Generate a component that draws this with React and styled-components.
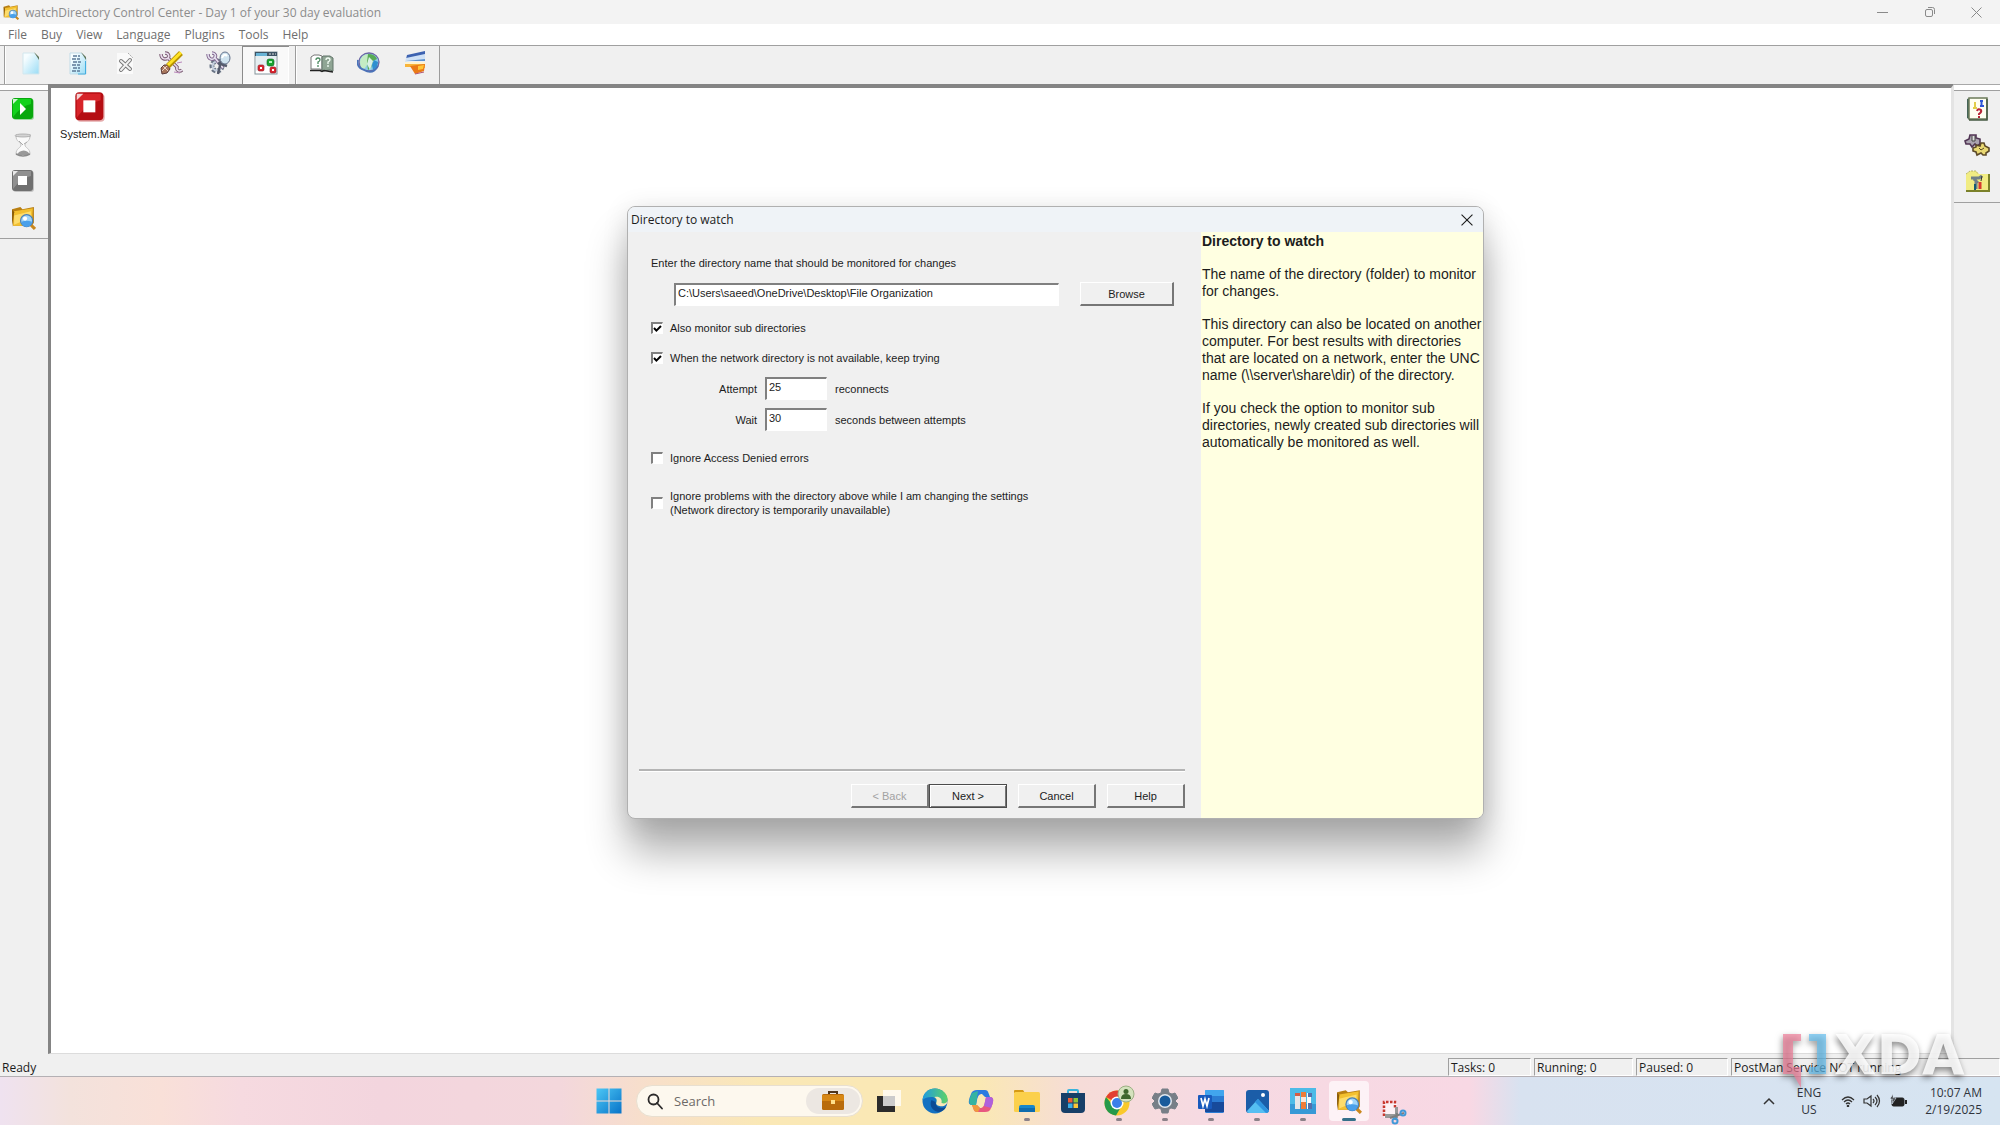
import React from "react";
import styled, { createGlobalStyle, css } from "styled-components";

const UI = '"Open Sans", "Noto Sans", sans-serif';
const CLASSIC = '"Liberation Sans", Arial, sans-serif';

const GlobalStyle = createGlobalStyle`
  *, *::before, *::after { box-sizing: border-box; }
  html, body { margin: 0; height: 100%; }
  body { font-family: ${UI}; font-size: 12px; color: #1c1c1c; background: #f0f0f0; overflow: hidden; }
  button, input { font: inherit; color: inherit; margin: 0; }
  svg { display: block; flex: none; }
`;

const Page = styled.div`
  display: flex;
  flex-direction: column;
  height: 100vh;
  position: relative;
`;

/* ---------- main window ---------- */
const TitleBar = styled.header`
  display: flex;
  align-items: center;
  height: 24px;
  padding-left: 3px;
  gap: 6px;
  background: #f3f3f3;
  color: #8c8c8c;
`;
const TitleText = styled.h1`
  flex: 1;
  margin: 0;
  font-size: 12px;
  font-weight: 400;
`;
const CaptionButtons = styled.div`
  display: flex;
`;
const CaptionButton = styled.button`
  display: grid;
  place-items: center;
  width: 47px;
  height: 22px;
  padding: 0;
  border: 0;
  background: none;
  color: #8a8a8a;
`;
const MenuBar = styled.nav`
  display: flex;
  align-items: center;
  height: 22px;
  padding-left: 8px;
  gap: 14px;
  background: #fff;
  border-bottom: 1px solid #a0a0a0;
`;
const MenuItem = styled.button`
  padding: 0;
  border: 0;
  background: none;
  font-size: 12px;
  line-height: 20px;
  color: #6e6e6e;
`;
const ToolBar = styled.div`
  display: flex;
  height: 38px;
  padding-left: 4px;
  background: #f0f0f0;
`;
const ToolGroup = styled.div`
  display: flex;
  padding: 0 6px 0 2px;
  border-left: 1px solid #9c9c9c;
  box-shadow: inset 1px 0 0 #fff;
  &:last-child {
    padding-right: 0;
    border-right: 1px solid #9c9c9c;
  }
`;
const ToolButton = styled.button`
  display: grid;
  place-items: center;
  width: 47px;
  height: 38px;
  padding: 0 0 4px;
  border: 0;
  background: none;
  ${(p) => p.$pressed && css`
    background: #f9f9f9;
    box-shadow: inset 1px 1px 0 #8c8c8c, inset -1px -1px 0 #fff;
  `}
`;
const Body = styled.main`
  flex: 1;
  display: flex;
  min-height: 0;
`;
const Rail = styled.aside`
  width: ${(p) => (p.$right ? 46 : 48)}px;
  padding-top: 5px;
  border-top: 1px solid #a8a8a8;
  background: linear-gradient(#fff, #fff) top / 100% 5px no-repeat #f0f0f0;
`;
const RailGroup = styled.div`
  display: flex;
  flex-direction: column;
  align-items: center;
  padding: 0 0 3px;
  border-top: 1px solid #a0a0a0;
  border-bottom: 1px solid #a0a0a0;
  ${(p) => !p.$right && css`padding-right: 2px;`}
`;
const RailButton = styled.button`
  display: grid;
  place-items: center;
  width: 36px;
  height: 36px;
  padding: 0;
  border: 0;
  background: none;
`;
const Workspace = styled.section`
  flex: 1;
  margin-bottom: 1px;
  padding: 3px 4px;
  background: #fff;
  border: solid #848484;
  border-width: 4px 3px 1px 3px;
  border-right-color: #e4e4e4;
  border-bottom-color: #dcdcdc;
`;
const TaskIcon = styled.button`
  display: flex;
  flex-direction: column;
  align-items: center;
  gap: 4px;
  width: 70px;
  padding: 0;
  border: 0;
  background: none;
  font-family: ${CLASSIC};
  font-size: 11px;
  line-height: 14px;
`;
const StatusBar = styled.footer`
  display: flex;
  height: 22px;
  padding-top: 3px;
  background: #f0f0f0;
  border-bottom: 1px solid #b4b0b4;
  gap: 3px;
  line-height: 17px;
`;
const StatusText = styled.div`
  flex: 1;
  padding: 1px 0 0 2px;
`;
const StatusPanel = styled.div`
  width: ${(p) => p.$width}px;
  padding-left: 2px;
  border: 1px solid #a0a0a0;
  border-right-color: #fff;
  border-bottom-color: #fff;
  white-space: nowrap;
`;

/* ---------- wizard dialog ---------- */
const Dialog = styled.section`
  position: absolute;
  left: 627px;
  top: 206px;
  width: 857px;
  height: 613px;
  display: flex;
  flex-direction: column;
  border: 1px solid #b0b0b0;
  border-radius: 8px;
  background: #f0f0f0;
  box-shadow: 0 34px 40px rgba(0, 0, 0, 0.3), 0 4px 26px rgba(0, 0, 0, 0.12);
`;
const DialogTitle = styled.header`
  display: flex;
  align-items: center;
  justify-content: space-between;
  height: 25px;
  padding: 0 8px 0 3px;
  background: #eff3f7;
  border-radius: 7px 7px 0 0;
`;
const DialogHeading = styled.h2`
  margin: 0;
  font-size: 12px;
  font-weight: 400;
`;
const CloseButton = styled.button`
  display: grid;
  place-items: center;
  width: 16px;
  height: 16px;
  padding: 0;
  border: 0;
  background: none;
`;
const DialogBody = styled.div`
  flex: 1;
  display: flex;
`;
const Form = styled.form`
  flex: 1;
  display: flex;
  flex-direction: column;
  padding: 24px 16px 10px 11px;
  font-family: ${CLASSIC};
  font-size: 11px;
  line-height: 14px;
`;
const Fields = styled.div`
  flex: 1;
  padding-left: 12px;
`;
const PathRow = styled.div`
  display: flex;
  align-items: center;
  gap: 21px;
  padding: 12px 11px 0 23px;
`;
const Input = styled.input`
  ${(p) => (p.$short ? css`width: 62px;` : css`flex: 1;`)}
  min-width: 0;
  height: 23px;
  padding: 0 2px 4px;
  border: 1px solid #fff;
  border-top: 2px solid #808080;
  border-left: 2px solid #808080;
  background: #fff;
  outline: none;
`;
const PushButton = styled.button`
  width: ${(p) => p.$width || 78}px;
  height: 24px;
  padding: 0;
  border: 1px solid #fff;
  border-right: 2px solid #767676;
  border-bottom: 2px solid #767676;
  background: #f0f0f0;
  ${(p) => p.$primary && css`
    border: 1px solid #4c4c4c;
    box-shadow: inset 1px 1px 0 #fff, inset -1px -1px 0 #767676;
  `}
  &:disabled { color: #a2a2a2; }
`;
const CheckLabel = styled.label`
  display: flex;
  align-items: center;
  gap: 7px;
  width: max-content;
  margin-top: ${(p) => p.$gap}px;
`;
const Check = styled.input`
  appearance: none;
  width: 12px;
  height: 12px;
  border: 1px solid #fff;
  border-top: 2px solid #808080;
  border-left: 2px solid #808080;
  background: #fff;
  &:checked {
    background: #fff url("data:image/svg+xml,%3Csvg xmlns='http://www.w3.org/2000/svg' viewBox='0 0 9 9'%3E%3Cpath d='M1 4l2.4 2.6L8 2' fill='none' stroke='black' stroke-width='2'/%3E%3C/svg%3E") center / 9px 9px no-repeat;
  }
`;
const Numbers = styled.div`
  display: grid;
  grid-template-columns: 106px 62px 1fr;
  align-items: center;
  gap: 8px;
  margin-top: 12px;
`;
const NumberLabel = styled.label`
  text-align: right;
`;
const Actions = styled.div`
  display: flex;
  justify-content: flex-end;
  gap: 11px;
  padding-top: 13px;
  border-top: 2px solid #b4b4b4;
  box-shadow: inset 0 1px 0 #fff;
`;
const Pair = styled.div`
  display: flex;
`;
const HelpPane = styled.aside`
  width: 282px;
  padding: 1px 0 0 1px;
  background: #ffffe1;
  border-radius: 0 0 7px 0;
  font-family: ${CLASSIC};
  font-size: 14px;
  line-height: 17px;
  white-space: nowrap;
`;
const HelpTitle = styled.h3`
  margin: 0 0 16px;
  font-size: 14px;
`;
const HelpText = styled.p`
  margin: 0 0 16px;
`;

/* ---------- taskbar ---------- */
const TaskBar = styled.footer`
  display: grid;
  grid-template-columns: 1fr auto 1fr;
  height: 48px;
  padding-left: 4px;
  background: linear-gradient(90deg, #efe2f0 0%, #f3e2dc 3.5%, #f9e0d8 8%, #f6dae0 12%, #f3d5de 19%, #f3d7dc 28%, #f8e0c8 33%, #fae8b6 38%, #fae8b4 49%, #f6dcd8 54%, #f6dae2 60%, #f8d8e4 73.5%, #d8e2f0 76%, #d6e4f1 100%);
`;
const Apps = styled.div`
  grid-column: 2;
  display: flex;
  align-items: center;
`;
const AppButton = styled.button`
  position: relative;
  display: grid;
  place-items: center;
  width: 46px;
  height: 48px;
  padding: ${(p) => (p.$low ? 22 : 0)}px 0 0;
  border: 0;
  background: none;
  ${(p) => p.$active && css`
    &::before {
      content: "";
      position: absolute;
      inset: 4px 3px;
      border-radius: 4px;
      background: rgba(255, 250, 252, 0.75);
    }
  `}
  ${(p) => p.$open && css`
    &::after {
      content: "";
      position: absolute;
      bottom: 4px;
      left: calc(50% - ${p.$active ? 7 : 3}px);
      width: ${p.$active ? 14 : 6}px;
      height: 3px;
      border-radius: 2px;
      background: ${p.$active ? "#35708a" : "#8b8188"};
    }
  `}
  svg { position: relative; }
`;
const SearchBox = styled.label`
  display: flex;
  align-items: center;
  width: 227px;
  height: 32px;
  margin: 0 3px 0 4px;
  padding: 0 2px 0 10px;
  gap: 11px;
  border: 1px solid #e8dfd0;
  border-radius: 16px;
  background: #fdf8ee;
`;
const SearchInput = styled.input`
  flex: 1;
  min-width: 0;
  padding: 0;
  border: 0;
  background: none;
  outline: none;
  font-size: 13px;
  &::placeholder { color: #6d6a68; opacity: 1; }
`;
const SearchArt = styled.span`
  display: grid;
  place-items: center;
  width: 54px;
  height: 26px;
  border-radius: 13px;
  background: #ece7e2;
`;
const Tray = styled.div`
  grid-column: 3;
  display: flex;
  align-items: center;
  justify-content: flex-end;
  padding-right: 18px;
  line-height: 17px;
  color: #30343c;
`;
const TrayButton = styled.button`
  display: flex;
  align-items: center;
  padding: 0;
  border: 0;
  background: none;
  gap: ${(p) => p.$gap || 0}px;
  margin-right: ${(p) => p.$after || 0}px;
`;
const TrayText = styled.div`
  text-align: ${(p) => p.$align};
  margin-right: ${(p) => p.$after || 0}px;
`;
const Logo = styled.svg`
  position: absolute;
  right: 28px;
  bottom: 35px;
  overflow: visible;
  pointer-events: none;
  filter: drop-shadow(-1px 3px 3px rgba(0, 0, 0, 0.55));
`;
const LogoText = styled.text`
  font-family: "DejaVu Sans", sans-serif;
  font-weight: 700;
  font-size: 55px;
`;

/* ---------- drawings ---------- */
const FolderSearch = ({ size = 24 }) => (
  <svg width={size} height={size} viewBox="0 0 24 24">
    <path d="M1 4l8-2 2 2 11-2v15l-2 3H2z" fill="#b97f12" />
    <path d="M3 6l18-3-1 17H2z" fill="#f3c02f" />
    <path d="M3 10l16-4v6L3 19z" fill="#ffe27a" opacity=".8" />
    <path d="M1 4v17l2-14" fill="#8a5c08" />
    <path d="M18 18l5 5" stroke="#c9871c" strokeWidth="3" />
    <circle cx="15" cy="15" r="5.8" fill="#9fd5fa" stroke="#4a7fb5" strokeWidth="1.2" />
    <path d="M10 16a5 5 0 0 0 10 0q-5-2-10 0" fill="#4aa0ea" />
    <circle cx="13.5" cy="13" r="2" fill="#fff" />
  </svg>
);
const NewDoc = () => (
  <svg width="18" height="23" viewBox="0 0 18 23">
    <defs><linearGradient id="doc" x2="1" y2="1"><stop offset=".2" stopColor="#f6fdff" /><stop offset="1" stopColor="#9adcf5" /></linearGradient></defs>
    <path d="M1 1h11l5 5v16H1z" fill="url(#doc)" stroke="#d2e7ee" />
    <path d="M12 0l5 5v3z" fill="#5d7358" />
  </svg>
);
const TextDoc = () => (
  <svg width="18" height="23" viewBox="0 0 18 23">
    <path d="M1 1h11l5 5v16H1z" fill="url(#doc)" stroke="#c2dce8" />
    <path d="M4 4h7M3 7h8M4 10h8M3 13h9M4 16h7M3 19h8" stroke="#5c7a98" strokeWidth="1.3" strokeDasharray="4 1 3 1" />
    <path d="M12 0l5 5v3z" fill="#5d7358" />
    <path d="M16.5 9v13H9" stroke="#43aee0" fill="none" />
  </svg>
);
const DeleteDoc = () => (
  <svg width="18" height="23" viewBox="0 0 18 23">
    <path d="M1 1h11l5 5v16H1z" fill="#fafafa" />
    <path d="M12 1l5 5" stroke="#aaa" strokeDasharray="2 1" />
    <path d="M5 9l9 8M14 8l-9 10" stroke="#777" strokeWidth="4" strokeLinecap="round" />
    <path d="M5 9l9 8M14 8l-9 10" stroke="#f2f2f2" strokeWidth="2" strokeLinecap="round" />
  </svg>
);
const ToolsIcon = () => (
  <svg width="25" height="24" viewBox="0 0 25 24" fill="none">
    <path d="M2 3c0 5 4 6 7 4l9 9c-1 4 3 5 5 3M8 8c3-2 2-6-2-6" stroke="#78576f" strokeWidth="3.400" />
    <path d="M2 3c0 5 4 6 7 4l9 9c-1 4 3 5 5 3M8 8c3-2 2-6-2-6" stroke="#e9dced" strokeWidth="1.600" />
    <path d="M2 17l3-3h4l2 4-3 4-5 1z" fill="#a8765c" stroke="#5a3a3a" />
    <path d="M4 15l5 5M3 20l5-5" stroke="#ecd3c4" />
    <path d="M9 15L22 2" stroke="#b89300" strokeWidth="5.500" />
    <path d="M9 14L22 1.500" stroke="#ffe326" strokeWidth="3" />
    <path d="M18 12l5-1M15 21l6 1" stroke="#b987bb" />
  </svg>
);
const GearTool = () => (
  <svg width="25" height="24" viewBox="0 0 25 24" fill="none">
    <circle cx="11" cy="15" r="5" stroke="#687384" strokeWidth="5" strokeDasharray="3 1.500" />
    <circle cx="11" cy="15" r="4.500" stroke="#c3cddd" strokeWidth="2" />
    <path d="M2 3c0 6 5 6 7 4l8 10M8 7c3-2 1-5-2-5" stroke="#80658e" strokeWidth="3.400" />
    <path d="M2 3c0 6 5 6 7 4l8 10M8 7c3-2 1-5-2-5" stroke="#e4e0ee" strokeWidth="1.600" />
    <path d="M15 10l-3 13M12 12l9 3" stroke="#555b6c" strokeWidth="2.400" />
    <ellipse cx="19" cy="7" rx="5" ry="6" fill="#cfe3ef" stroke="#65738d" />
    <path d="M16 7q2-5 5-2" stroke="#fff" strokeWidth="2" />
  </svg>
);
const Panel = () => (
  <svg width="24" height="24" viewBox="0 0 24 24">
    <rect x="1" y="1" width="22" height="22" fill="#fff" stroke="#84939a" />
    <path d="M1 1h22v4H1z" fill="#3d5364" /><path d="M2 2h11v3H2z" fill="#68b3d5" />
    <path d="M15 3h2m1 0h2m1 0h1" stroke="#ddd" />
    <path d="M2 5h20v6L2 20z" fill="#e5eef1" />
    <rect x="13" y="8" width="7" height="7" rx="2" fill="#19a52f" stroke="#126322" strokeWidth=".6" /><path d="M15 10h3v2h-3z" fill="#b5f4c0" />
    <rect x="4" y="14" width="6" height="6" rx="1.500" fill="#dc2630" stroke="#8c1420" strokeWidth=".6" /><path d="M6 16h2v2H6z" fill="#fff" />
    <rect x="16" y="16" width="6" height="6" rx="1.500" fill="#dc2630" stroke="#8c1420" strokeWidth=".6" /><path d="M18 18h2v2h-2z" fill="#fff" />
  </svg>
);
const Book = () => (
  <svg width="24" height="20" viewBox="0 0 24 20">
    <path d="M1 4l3-2h5l3 1v14l-2-1H1z" fill="#fff" stroke="#777" />
    <path d="M12 4l1-1h7l3 2v13l-3-1-8 1z" fill="#8fa594" stroke="#62756a" />
    <path d="M0 17.500h10l2 1 2-1 9 1.500" stroke="#222" fill="none" strokeWidth="1.500" />
    <path d="M6 7q0-2 2-2t2 2q0 1-2 2v2m0 1v2" stroke="#4b8a60" fill="none" strokeWidth="1.300" />
    <path d="M16 7q0-2 2-2t2 2q0 1-2 2v2m0 1v2" stroke="#f5fff7" fill="none" strokeWidth="1.300" />
  </svg>
);
const Globe = () => (
  <svg width="24" height="22" viewBox="0 0 24 22">
    <ellipse cx="12" cy="10" rx="10" ry="9" fill="#8ccbe8" stroke="#6c66a5" strokeWidth="1.300" />
    <path d="M3 10Q4 2 12 2l1 6-5 8-3 1Q3 14 3 10" fill="#c4ecc4" />
    <path d="M11 2q7 0 9 5l-4 2-2 7-3 2-1-8z" fill="#58aa54" />
    <path d="M12 5l4 4-3 9-3-6z" fill="#f0fbff" opacity=".85" />
    <path d="M17 8l4 2q0 5-5 8l-1-5z" fill="#2f8fd0" />
    <path d="M1 8q-2 7 6 10 9 5 14-4" fill="none" stroke="#4a72b8" strokeWidth="1.800" />
  </svg>
);
const Cards = () => (
  <svg width="23" height="24" viewBox="0 0 23 24">
    <path d="M3 4L21 0v4L2 8z" fill="#3d62b0" /><path d="M2 7l19-4v5L1 11z" fill="#cfe1f6" /><path d="M2 10l19-2v2H1z" fill="#5c92d0" />
    <path d="M1 11h20v6l-7-1H1z" fill="#f8b43a" /><path d="M1 11h20v2H1z" fill="#fff3cf" />
    <path d="M6 15l15-2-1 7-9 3z" fill="#ea7a17" /><path d="M11 23l9-2" stroke="#b15572" /><path d="M14 15l6-1-1 4-5 1z" fill="#ffc638" />
  </svg>
);
const SquareSign = ({ size, dark, light, play }) => (
  <svg width={size} height={size} viewBox="0 0 24 24">
    <rect x="2" y="2" width="21" height="21" rx="3" fill={dark} opacity=".35" />
    <rect x="1" y="1" width="21" height="21" rx="3" fill={dark} />
    <path d="M3 2h17v5Q10 9 2 20V4z" fill={light} opacity=".8" />
    <path d="M2 2h5L2 7z" fill="#fff" opacity=".8" />
    {play ? <path d="M9 6l6 6-6 6z" fill="#fff" /> : <rect x="7" y="7" width="9" height="9" fill="#fff" />}
  </svg>
);
const Hourglass = () => (
  <svg width="20" height="24" viewBox="0 0 20 24">
    <path d="M3 3h14c0 6-5 6-5 9s5 3 5 9H3c0-6 5-6 5-9S3 9 3 3" fill="#fafafa" stroke="#c4c4c4" />
    <path d="M6 19q5-3 9 0l2 3H4z" fill="#999" /><ellipse cx="10" cy="2.500" rx="8" ry="1.500" fill="#d4d4d4" stroke="#a4a4a4" strokeWidth=".8" />
    <path d="M3 21q7 4 14 0" stroke="#8a8a8a" fill="none" strokeWidth="1.500" /><path d="M6 8l4 4M14 9l-3 2" stroke="#aaa" />
  </svg>
);
const Manual = () => (
  <svg width="22" height="24" viewBox="0 0 22 24">
    <path d="M1 2l3-1v22l-3-2z" fill="#456458" /><rect x="3" y="1" width="18" height="21" fill="#fffff1" stroke="#6c7b59" strokeWidth="1.500" />
    <path d="M21 2v21H3" stroke="#455943" strokeWidth="1.500" fill="none" />
    <path d="M14 4h3M15.500 4v5M14 9h4" stroke="#3058d8" strokeWidth="2" /><path d="M9 5v7M7 11h4" stroke="#e2cd48" strokeWidth="2" />
    <path d="M11 14q1-3 4-1 1 2-2 4v1m0 1v2" stroke="#b62637" strokeWidth="2" fill="none" />
  </svg>
);
const Gears = () => (
  <svg width="26" height="24" viewBox="0 0 26 24">
    <path d="M8 2h4v3l4 1v5l-3 2-2-2-3 3-2-3H2L1 8l4-2 1-4z" fill="#aaa3af" stroke="#513554" strokeWidth="1.600" />
    <path d="M8 3v5h3V3" stroke="#444" fill="#ddd" />
    <path d="M12 12l4 1 1-3h3l1 3 4 2v3l-3 2v2h-3l-2-2-4 2-1-3-3-1v-3l3-1z" fill="#e9d873" stroke="#5d4a28" strokeWidth="1.600" />
    <path d="M15 15l2 2 3-2" stroke="#554723" fill="none" />
  </svg>
);
const ToolFolder = () => (
  <svg width="25" height="22" viewBox="0 0 25 22">
    <path d="M1 4l4-3h6l3 3h9v16H1z" fill="#f1ec83" /><path d="M1 4l4-3h6l2 3" stroke="#b8b46d" fill="none" strokeDasharray="2 1" />
    <path d="M24 4v17H1" stroke="#7b812a" strokeWidth="2" fill="none" />
    <path d="M6 8h8l3-2M9 9l4 4M11 12v7" stroke="#718088" strokeWidth="3" fill="none" />
    <path d="M15 12v7" stroke="#d73b30" strokeWidth="3" /><path d="M16 11l1-5" stroke="#333" /><path d="M10 14v6" stroke="#165b71" strokeWidth="2" />
  </svg>
);
const Lens = () => (
  <svg width="16" height="17" viewBox="0 0 16 17" fill="none" stroke="#2c2a2a" strokeWidth="1.800"><circle cx="6.500" cy="6.500" r="5" /><path d="M10 10l5 5.500" strokeLinecap="round" /></svg>
);
const Cross = ({ size = 11 }) => (
  <svg width={size} height={size} viewBox="0 0 11 11"><path d="M.5.5l10 10m0-10l-10 10" stroke="currentColor" fill="none" /></svg>
);
const Briefcase = () => (
  <svg width="24" height="20" viewBox="0 0 24 20"><path d="M8 4V1h8v3" stroke="#50351c" strokeWidth="2" fill="none" /><rect x="1" y="3" width="22" height="16" rx="1.500" fill="#b96c0c" /><path d="M1 4h22v6H1z" fill="#d78715" /><rect x="10" y="9" width="4" height="4" fill="#ffe08a" /></svg>
);
const Windows = () => (
  <svg width="26" height="26" viewBox="0 0 26 26"><defs><linearGradient id="win" x2="1" y2="1"><stop stopColor="#4cc7f5" /><stop offset="1" stopColor="#0873c8" /></linearGradient></defs><path d="M.5.5h12v12H.5zM13.500.5h12v12h-12zM.5 13.500h12v12H.5zM13.500 13.500h12v12h-12z" fill="url(#win)" /></svg>
);
const TaskView = () => (
  <svg width="26" height="24" viewBox="0 0 26 24"><rect x="1" y="7" width="18" height="16" fill="#2b2b2b" /><rect x="7" y="1" width="18" height="16" fill="#fff" opacity=".75" /><path d="M7 7h12v10H7z" fill="#cbcbcb" /></svg>
);
const Edge = () => (
  <svg width="26" height="26" viewBox="0 0 26 26"><defs><linearGradient id="eg" x2="1"><stop stopColor="#1e9be0" /><stop offset="1" stopColor="#5ed267" /></linearGradient></defs>
    <circle cx="13" cy="13" r="12.500" fill="#1471c1" /><path d="M.6 12C1 5 6 .5 13 .5S25.500 6 25.500 11c0 4-3 6-7 6-3 0-5-1-4-3 1-3-2-5-5-5-4 0-7 1-8.900 3" fill="url(#eg)" />
    <path d="M9.500 12c-3 6 2 12 8 12 3-1 5-2 6.500-5-5 2-10 1-10.500-5z" fill="#0d4b94" /><path d="M25.500 13c0 4-4 6-8 5-3-.5-4-2-3-4 1-3-1-4-2-5 5-1 8 2 7 6 3 1 5 0 6-2" fill="#fae8b8" /></svg>
);
const Copilot = () => (
  <svg width="26" height="24" viewBox="0 0 26 24"><path d="M9 1h8c2 0 3 1 3.500 3L22 8h-5l-3-3c-3 0-4 2-5 6l-1 5H4C1 16 0 14 1.500 9L3 5c1-3 3-4 6-4" fill="#2b7be0" /><path d="M2 9l2-5 6-2-2 14H4c-3 0-3-3-2-7" fill="#35b4a0" /><path d="M17 23H9c-2 0-3-1-3.500-3L4 16h5l3 3c3 0 4-2 5-6l1-5h4c3 0 4 2 2.500 7L23 19c-1 3-3 4-6 4" fill="#e8587f" /><path d="M18 8h4c3 0 4 2 2.500 7L23 19l-7-2z" fill="#ae61dc" /><path d="M4 16h5l3 3-2 4c-3 0-4-1-4.500-3z" fill="#f09a3e" /></svg>
);
const Explorer = () => (
  <svg width="26" height="24" viewBox="0 0 26 24"><path d="M0 2q0-1 1-1h8l2 3H0z" fill="#d59a16" /><rect y="3" width="26" height="20" rx="1.500" fill="#fbd04c" /><path d="M5 23v-5q0-2 2-2h12q2 0 2 2v5z" fill="#1687cb" /><path d="M5 19h16v4H5z" fill="#0e6cae" /></svg>
);
const Store = () => (
  <svg width="26" height="26" viewBox="0 0 26 26"><path d="M8 6V3q0-1 1-1h8q1 0 1 1v3" stroke="#39b3dc" strokeWidth="2" fill="none" /><path d="M1 5h24v16q0 4-4 4H5q-4 0-4-4z" fill="#173f68" /><path d="M8 10h4.500v4.500H8z" fill="#f05c36" /><path d="M13.500 10H18v4.500h-4.500z" fill="#8fc438" /><path d="M8 15.500h4.500V20H8z" fill="#3aaee8" /><path d="M13.500 15.500H18V20h-4.500z" fill="#fcc537" /></svg>
);
const Chrome = () => (
  <svg width="32" height="32" viewBox="0 0 32 32"><circle cx="14" cy="18" r="12.500" fill="#fac92b" /><path d="M14 18L3 12A12.500 12.500 0 0 1 25 12z" fill="#e34032" /><path d="M14 18h-6L3 12a12.500 12.500 0 0 0 10 18.500l4-7z" fill="#26994a" /><circle cx="14" cy="18" r="6.500" fill="#fff" /><circle cx="14" cy="18" r="5" fill="#3c7fe8" /><circle cx="23" cy="9" r="8" fill="#d4e2bd" stroke="#9cb084" /><circle cx="23" cy="6.500" r="2.500" fill="#3f672d" /><path d="M18 14q0-5 5-5t5 5z" fill="#3f672d" /></svg>
);
const Settings = () => (
  <svg width="26" height="26" viewBox="0 0 26 26"><path d="M10 1h6l1 4 3 1 3-1 3 5-3 3 3 3-3 5-4-1-2 1-1 4h-6l-1-4-2-1-4 1-3-5 3-3-3-3 3-5 3 1 3-1z" fill="#777f87" stroke="#777f87" strokeLinejoin="round" /><circle cx="13" cy="13" r="7" fill="#e1e8ef" /><circle cx="13" cy="13" r="5.500" fill="#175b9b" /></svg>
);
const Word = () => (
  <svg width="27" height="25" viewBox="0 0 27 25"><rect x="7" y="1" width="19" height="23" rx="1.500" fill="#2b7cd3" /><path d="M7 2q0-1 1-1h17q1 0 1 1v5H7z" fill="#41a5ee" /><path d="M7 13h19v10H7z" fill="#174a9b" /><rect x="0" y="6" width="14" height="14" rx="1" fill="#185abd" /><path d="M3 9l2 8 2-7 2 7 2-8" stroke="#fff" strokeWidth="1.700" fill="none" /></svg>
);
const Photos = () => (
  <svg width="25" height="25" viewBox="0 0 25 25"><rect x="1" y="1" width="23" height="23" rx="3" fill="#1b5da8" /><path d="M2 22L13 10l11 12q-1 2-3 2H4q-2 0-2-2" fill="#55bff2" /><path d="M13 10l11 12q-1 2-3 2L10 13z" fill="#2e93df" /><circle cx="18" cy="6" r="2" fill="#fff" /></svg>
);
const Binders = () => (
  <svg width="26" height="26" viewBox="0 0 26 26"><path d="M0 0h26v26H0z" fill="#4dbbe7" /><path d="M0 16h26v10H0z" fill="#3799d6" /><path d="M5 5h5v16H5z" fill="#e5e6e8" /><path d="M5 5h5v3H5z" fill="#d45d43" /><path d="M11 4h5v17h-5z" fill="#ee7c39" /><path d="M11 9h5v5h-5z" fill="#fbe7dc" /><path d="M17 5h4v16h-4z" fill="#fafafa" /><path d="M18 5h4v4h-4zM18 15h4v6h-4z" fill="#5470ac" /></svg>
);
const Snip = () => (
  <svg width="26" height="26" viewBox="0 0 26 26"><rect x="2" y="3" width="13" height="16" fill="#fff" opacity=".65" /><path d="M2 17V3h11v6" stroke="#c8392f" strokeWidth="2.500" strokeDasharray="2.500 1.500" fill="none" /><path d="M3 15h13v4H3zM13 8h3v11h-3z" fill="#999" /><path d="M8 19l14-5M13 21l2-7" stroke="#7d7d7d" strokeWidth="2" /><circle cx="21" cy="14" r="2.500" fill="none" stroke="#4199d8" strokeWidth="2" /><circle cx="13" cy="22" r="2.500" fill="none" stroke="#4199d8" strokeWidth="2" /></svg>
);
const Chevron = () => <svg width="12" height="8" viewBox="0 0 12 8"><path d="M1 7l5-5 5 5" stroke="#333" strokeWidth="1.500" fill="none" /></svg>;
const Wifi = () => <svg width="14" height="12" viewBox="0 0 14 12" fill="none" stroke="#333" strokeWidth="1.200"><path d="M1 5q6-6 12 0M3 7q4-4 8 0M5 9q2-2 4 0" /><circle cx="7" cy="11" r=".7" fill="#333" /></svg>;
const Speaker = () => <svg width="18" height="14" viewBox="0 0 18 14" fill="none" stroke="#333" strokeWidth="1.200"><path d="M1 5h3l4-3v10L4 9H1zM10 5q2 2 0 4M12 3q4 4 0 8M14 1q5 6 0 12" /></svg>;
const Battery = () => <svg width="18" height="14" viewBox="0 0 18 14"><rect x="3" y="4" width="12" height="8" rx="1.500" fill="#222" stroke="#222" /><path d="M16 6h2v4h-2z" fill="#222" /><path d="M4 0L1 5h3l-1 5 4-6H4z" fill="#222" stroke="#d7e3f0" strokeWidth=".7" /></svg>;

const tools = [["New task", NewDoc], ["Edit task", TextDoc], ["Delete task", DeleteDoc], ["Configure", ToolsIcon], ["Service", GearTool], ["Panel", Panel]];
const links = [["Manual", Book], ["Website", Globe], ["Buy", Cards]];
const apps = [["Task view", TaskView], ["Edge", Edge], ["Copilot", Copilot], ["File Explorer", Explorer, 1], ["Store", Store], ["Chrome", Chrome, 1], ["Settings", Settings, 1], ["Word", Word, 1], ["Photos", Photos, 1], ["Library", Binders, 1]];

export default function App() {
  return (
    <Page>
      <GlobalStyle />
      <TitleBar>
        <FolderSearch size={16} />
        <TitleText>watchDirectory Control Center - Day 1 of your 30 day evaluation</TitleText>
        <CaptionButtons>
          <CaptionButton aria-label="Minimize"><svg width="11" height="11"><path d="M0 5.500h11" stroke="currentColor" /></svg></CaptionButton>
          <CaptionButton aria-label="Restore"><svg width="12" height="12" fill="none" stroke="currentColor"><rect x="1.500" y="3.500" width="7" height="7" rx="1.500" /><path d="M4 1.500h4.500q2 0 2 2V8" /></svg></CaptionButton>
          <CaptionButton aria-label="Close"><Cross /></CaptionButton>
        </CaptionButtons>
      </TitleBar>
      <MenuBar>
        {["File", "Buy", "View", "Language", "Plugins", "Tools", "Help"].map((m) => <MenuItem key={m}>{m}</MenuItem>)}
      </MenuBar>
      <ToolBar>
        <ToolGroup>
          {tools.map(([name, Icon]) => <ToolButton key={name} aria-label={name} $pressed={name === "Panel"}><Icon /></ToolButton>)}
        </ToolGroup>
        <ToolGroup>
          {links.map(([name, Icon]) => <ToolButton key={name} aria-label={name}><Icon /></ToolButton>)}
        </ToolGroup>
      </ToolBar>
      <Body>
        <Rail>
          <RailGroup>
            <RailButton aria-label="Start"><SquareSign size={24} dark="#08a80d" light="#16dc20" play /></RailButton>
            <RailButton aria-label="Pause"><Hourglass /></RailButton>
            <RailButton aria-label="Stop"><SquareSign size={24} dark="#707070" light="#999" /></RailButton>
            <RailButton aria-label="Browse"><FolderSearch size={25} /></RailButton>
          </RailGroup>
        </Rail>
        <Workspace>
          <TaskIcon><SquareSign size={32} dark="#b50d12" light="#e02b2f" />System.Mail</TaskIcon>
        </Workspace>
        <Rail $right>
          <RailGroup $right>
            <RailButton aria-label="Guide"><Manual /></RailButton>
            <RailButton aria-label="Plugins"><Gears /></RailButton>
            <RailButton aria-label="Tool folder"><ToolFolder /></RailButton>
          </RailGroup>
        </Rail>
      </Body>
      <StatusBar>
        <StatusText>Ready</StatusText>
        <StatusPanel $width={83}>Tasks: 0</StatusPanel>
        <StatusPanel $width={99}>Running: 0</StatusPanel>
        <StatusPanel $width={92}>Paused: 0</StatusPanel>
        <StatusPanel $width={269}>PostMan Service NOT running</StatusPanel>
      </StatusBar>
      <TaskBar>
        <Apps>
          <AppButton aria-label="Start menu"><Windows /></AppButton>
          <SearchBox>
            <Lens />
            <SearchInput type="search" placeholder="Search" aria-label="Search" />
            <SearchArt><Briefcase /></SearchArt>
          </SearchBox>
          {apps.map(([name, Icon, open]) => <AppButton key={name} aria-label={name} $open={open}><Icon /></AppButton>)}
          <AppButton aria-label="watchDirectory" $open $active><FolderSearch size={26} /></AppButton>
          <AppButton aria-label="Snipping Tool" $low><Snip /></AppButton>
        </Apps>
        <Tray>
          <TrayButton aria-label="Hidden icons" $after={22}><Chevron /></TrayButton>
          <TrayText $align="center" $after={20}>ENG<br />US</TrayText>
          <TrayButton aria-label="Network, volume, battery" $gap={8} $after={18}><Wifi /><Speaker /><Battery /></TrayButton>
          <TrayText $align="right">10:07 AM<br />2/19/2025</TrayText>
        </Tray>
      </TaskBar>

      <Dialog role="dialog" aria-labelledby="dlg">
        <DialogTitle>
          <DialogHeading id="dlg">Directory to watch</DialogHeading>
          <CloseButton aria-label="Close dialog"><Cross size={12} /></CloseButton>
        </DialogTitle>
        <DialogBody>
          <Form onSubmit={(e) => e.preventDefault()}>
            <Fields>
              <label htmlFor="path">Enter the directory name that should be monitored for changes</label>
              <PathRow>
                <Input id="path" defaultValue="C:\Users\saeed\OneDrive\Desktop\File Organization" />
                <PushButton type="button" $width={94}>Browse</PushButton>
              </PathRow>
              <CheckLabel $gap={15}><Check type="checkbox" defaultChecked />Also monitor sub directories</CheckLabel>
              <CheckLabel $gap={16}><Check type="checkbox" defaultChecked />When the network directory is not available, keep trying</CheckLabel>
              <Numbers>
                <NumberLabel htmlFor="attempt">Attempt</NumberLabel>
                <Input $short id="attempt" defaultValue="25" />
                <span>reconnects</span>
                <NumberLabel htmlFor="wait">Wait</NumberLabel>
                <Input $short id="wait" defaultValue="30" />
                <span>seconds between attempts</span>
              </Numbers>
              <CheckLabel $gap={20}><Check type="checkbox" />Ignore Access Denied errors</CheckLabel>
              <CheckLabel $gap={24}>
                <Check type="checkbox" />
                <span>Ignore problems with the directory above while I am changing the settings<br />(Network directory is temporarily unavailable)</span>
              </CheckLabel>
            </Fields>
            <Actions>
              <Pair>
                <PushButton type="button" disabled>&lt; Back</PushButton>
                <PushButton type="submit" $primary>Next &gt;</PushButton>
              </Pair>
              <PushButton type="button">Cancel</PushButton>
              <PushButton type="button">Help</PushButton>
            </Actions>
          </Form>
          <HelpPane>
            <HelpTitle>Directory to watch</HelpTitle>
            <HelpText>The name of the directory (folder) to monitor<br />for changes.</HelpText>
            <HelpText>This directory can also be located on another<br />computer. For best results with directories<br />that are located on a network, enter the UNC<br />name (\\server\share\dir) of the directory.</HelpText>
            <HelpText>If you check the option to monitor sub<br />directories, newly created sub directories will<br />automatically be monitored as well.</HelpText>
          </HelpPane>
        </DialogBody>
      </Dialog>

      <Logo width="190" height="60" viewBox="0 0 190 60" role="img" aria-label="XDA">
        <path d="M1 4h18v7h-8v26h8v21l-8-14H1z" fill="#ee7d99" opacity=".7" />
        <path d="M27 4h17v40H27v-7h8V11h-8z" fill="#63bdee" opacity=".7" />
        <LogoText x="52" y="44" fill="#fff" fillOpacity=".85">XDA</LogoText>
      </Logo>
    </Page>
  );
}
